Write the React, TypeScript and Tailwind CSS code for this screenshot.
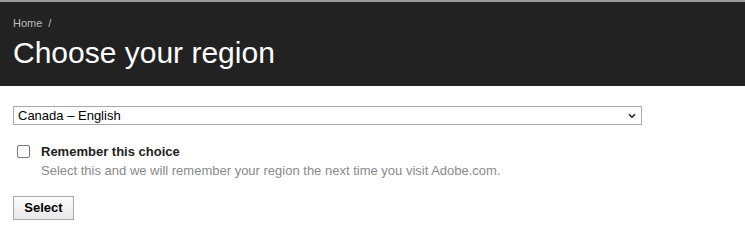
import React from "react";

export default function App() {
  return (
    <div className="w-[745px] h-[247px] bg-white" style={{ fontFamily: '"Liberation Sans", Arial, sans-serif' }}>
      <div className="h-[2px] bg-[#9a9a9a]" />
      <div className="bg-[#222222] h-[84px] pl-[13px] pt-[15px]">
        <div className="text-[11px] leading-[13px] text-[#bdbdbd] flex gap-[6px]">
          <span>Home</span>
          <span>/</span>
        </div>
        <h1 className="text-[30px] leading-[34px] text-white mt-[6px]">Choose your region</h1>
      </div>
      <div className="pl-[13px] pt-[20px]">
        <div className="relative w-[629px] h-[19px] border border-[#a9a9a9] bg-white flex items-center">
          <span className="text-[13px] text-black pl-[4px]">Canada – English</span>
          <svg className="absolute right-[5px] top-[6px]" width="8" height="6" viewBox="0 0 8 6">
            <path d="M1 1.2 L4 4.2 L7 1.2" fill="none" stroke="#222" strokeWidth="1.6" />
          </svg>
        </div>
        <div className="flex mt-[19px]">
          <div className="w-[13px] h-[13px] border border-[#767676] rounded-[2px] ml-[4px] mt-[1px] bg-white" />
          <div className="ml-[11px]">
            <div className="text-[13px] leading-[15px] font-bold text-[#222]">Remember this choice</div>
            <div className="text-[13px] leading-[15px] text-[#8a8a8a] mt-[4px]">
              Select this and we will remember your region the next time you visit Adobe.com.
            </div>
          </div>
        </div>
        <button className="mt-[18px] w-[61px] h-[24px] border border-[#a9a9a9] bg-gradient-to-b from-[#fcfcfc] to-[#e8e8e8] text-[13px] font-bold text-black">
          Select
        </button>
      </div>
    </div>
  );
}
